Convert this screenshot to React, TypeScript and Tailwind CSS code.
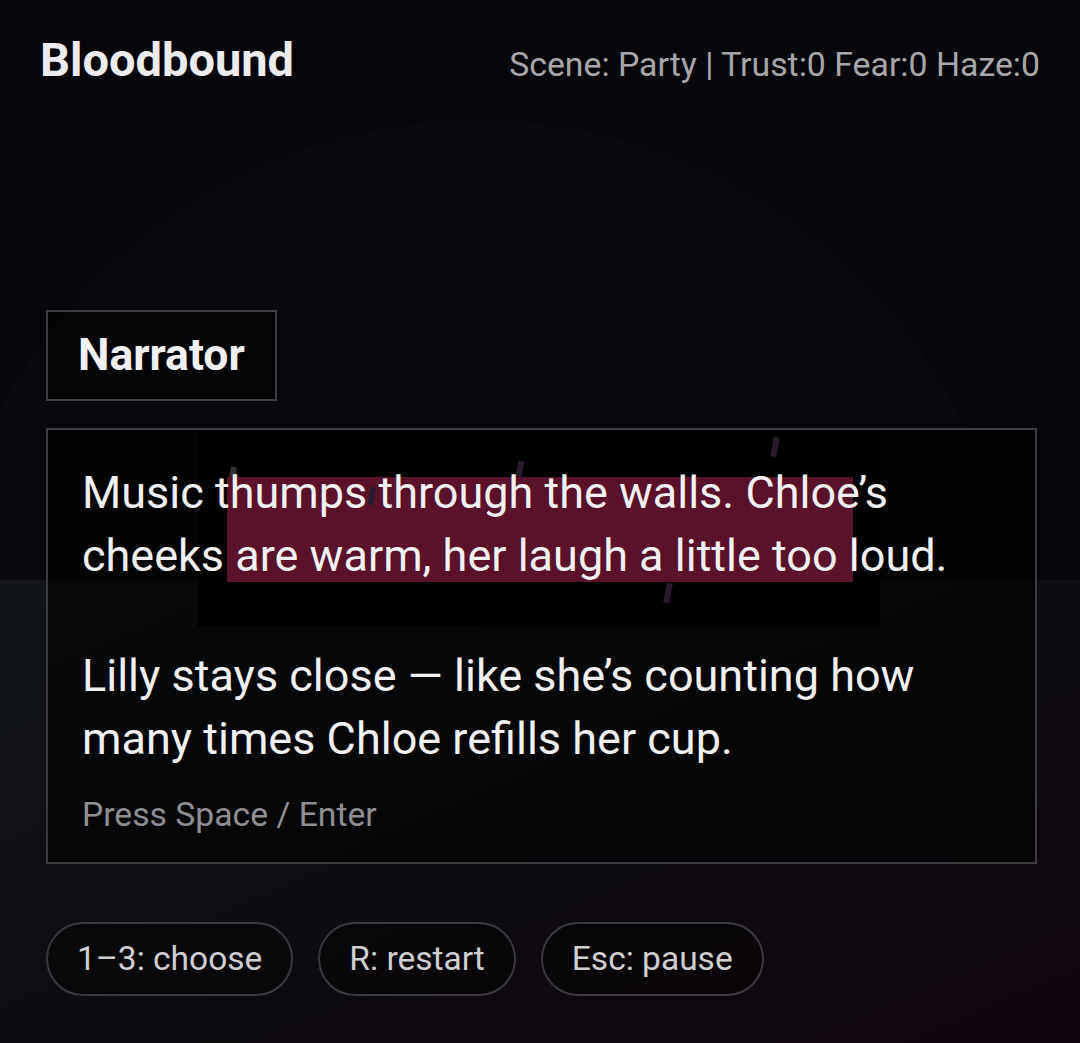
import React from "react";

const paragraphs = [
  "Music thumps through the walls. Chloe\u2019s cheeks are warm, her laugh a little too loud.",
  "Lilly stays close \u2014 like she\u2019s counting how many times Chloe refills her cup.",
];

const hints = ["1\u20133: choose", "R: restart", "Esc: pause"];

// falling specks drawn on the scene canvas
const specks = [
  { x: 517, y: 461, h: 16, c: "#6a4270" },
  { x: 772, y: 437, h: 20, c: "#6a4270" },
  { x: 369, y: 487, h: 18, c: "#6a4270" },
  { x: 665, y: 583, h: 20, c: "#6a4270" },
  { x: 230, y: 467, h: 10, c: "#8a7a8a" },
];

const SceneBackdrop = () => (
  <svg
    className="absolute inset-0 h-full w-full"
    viewBox="0 0 1080 1043"
    preserveAspectRatio="none"
  >
    <defs>
      <linearGradient id="floor" x1="0" y1="0" x2="1" y2="1">
        <stop offset="0" stopColor="#121619" />
        <stop offset="0.55" stopColor="#0e0c10" />
        <stop offset="1" stopColor="#10060d" />
      </linearGradient>
    </defs>
    <rect width="1080" height="1043" fill="#07060a" />
    <circle cx="478" cy="660" r="540" fill="#09080c" />
    <rect y="580" width="1080" height="463" fill="url(#floor)" />
    <rect x="198" y="432" width="682" height="195" fill="#000000" />
    <rect x="227" y="477" width="626" height="105" fill="#e12c69" />
    {specks.map((s, i) => (
      <rect
        key={i}
        x={s.x}
        y={s.y}
        width="6"
        height={s.h}
        fill={s.c}
        transform={`rotate(10 ${s.x + 3} ${s.y + s.h / 2})`}
      />
    ))}
  </svg>
);

export default function App() {
  return (
    <div className="relative h-screen min-h-[1043px] overflow-hidden bg-[#07060a] font-['Roboto','Liberation_Sans',sans-serif]">
      <SceneBackdrop />

      <div className="relative flex h-full flex-col">
        <header className="flex items-baseline justify-between px-[40px] pt-[36px]">
          <h1 className="text-[47px] font-bold leading-none text-[#ececee]">Bloodbound</h1>
          <div className="text-[33.8px] leading-none text-[#a7a7ab]">
            Scene: Party | Trust:0 Fear:0 Haze:0
          </div>
        </header>

        <div className="flex-1" />

        <main className="flex flex-col pb-[47px] pl-[46px] pr-[43px]">
          <div className="self-start border-2 border-[#3c3c41] bg-black/50 px-[30px] py-[12px] text-[44.5px] font-bold leading-[63px] text-[#f0f0f2]">
            Narrator
          </div>

          <section className="mt-[27px] border-2 border-[#3c3c41] bg-black/60 pb-[23px] pl-[34px] pr-[34px] pt-[31px]">
            {paragraphs.map((p, i) => (
              <p
                key={i}
                className={`text-[45px] leading-[63px] text-[#f1f0f2] ${i > 0 ? "mt-[57px]" : ""}`}
              >
                {p}
              </p>
            ))}
            <p className="mt-[21px] text-[33.7px] leading-[48px] text-[#8e8e93]">Press Space / Enter</p>
          </section>

          <div className="mt-[58px] flex gap-[25px]">
            {hints.map((h) => (
              <span
                key={h}
                className="rounded-full border-2 border-[#3a393e] bg-black/40 px-[29px] py-[11px] text-[33.5px] leading-[48px] text-[#cfcfd2]"
              >
                {h}
              </span>
            ))}
          </div>
        </main>
      </div>
    </div>
  );
}
